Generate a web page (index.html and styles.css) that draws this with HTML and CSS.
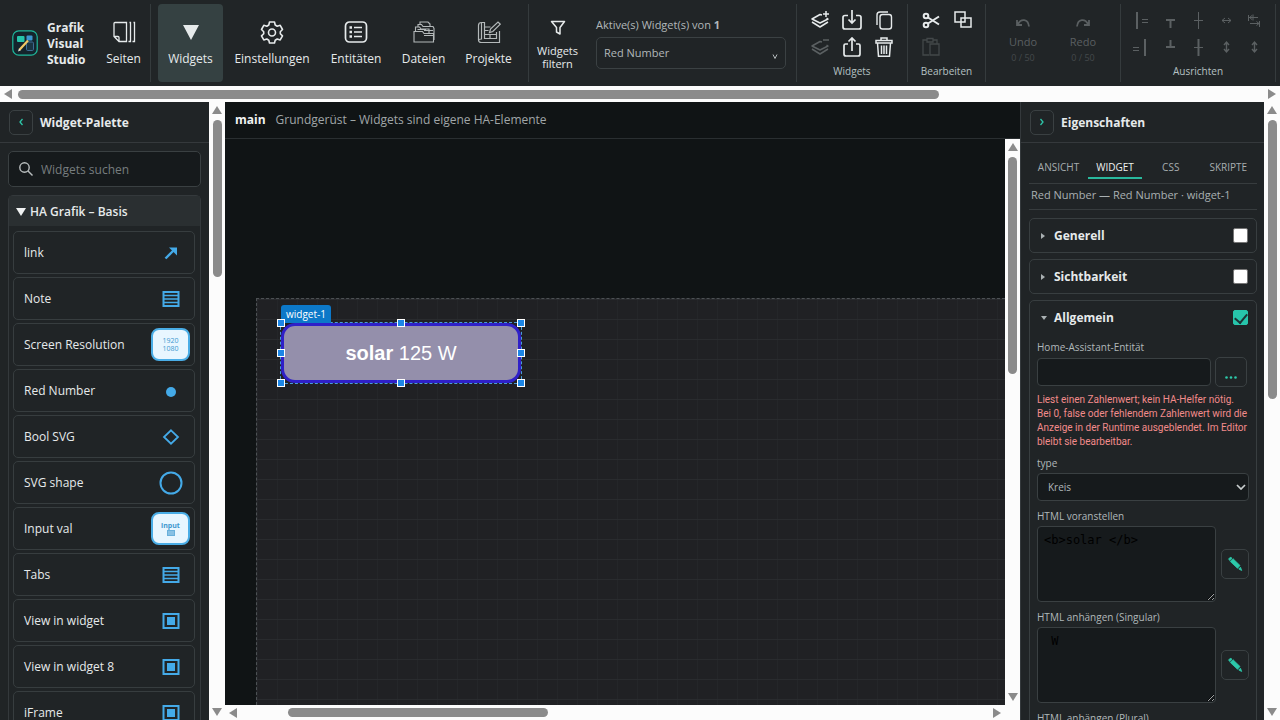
FILE: index.html
```html
<!DOCTYPE html>
<html lang="de">
<head>
<meta charset="utf-8">
<title>Grafik Visual Studio</title>
<link rel="stylesheet" href="styles.css">
</head>
<body>
<svg class="defs" aria-hidden="true">
  <symbol id="i-rows" viewBox="0 0 18 16"><path d="M1.500 1h15v14h-15z" fill="none" stroke="currentColor" stroke-width="2"/><path d="M2 4.500h14M2 8h14M2 11.500h14" fill="none" stroke="currentColor" stroke-width="1.500"/></symbol>
  <symbol id="i-frame" viewBox="0 0 18 16"><path d="M1.500 1h15v14h-15z" fill="none" stroke="currentColor" stroke-width="2"/><path d="M5 4h8v8H5z" fill="currentColor"/></symbol>
  <symbol id="i-pencil" viewBox="0 0 16 16"><path d="M1.500 3.200 3.200 1.300 5 2 3 4.500zM3.300 5.500 6 2.700 13 9.500l-2.500 2.800zM11.700 13l1.800-1.800 1.200 3.300z" fill="currentColor" stroke="currentColor" stroke-width=".8" stroke-linejoin="round"/></symbol>
</svg>

<header class="toolbar">
  <div class="brand">
    <svg class="logo" viewBox="0 0 26 26"><rect x=".8" y=".8" width="24.400" height="24.400" rx="6" fill="#14242c" stroke="#1fb89c" stroke-width="1.200"/><rect x="5" y="6" width="7.500" height="6" rx="1" fill="#25c4aa"/><rect x="14.500" y="5.500" width="6" height="5" rx="1" fill="#3d95cf"/><rect x="14.500" y="12" width="7" height="8.500" rx="1.200" fill="#1b3442" stroke="#3d6d94"/><path d="M7.500 19.800 16 10.500" stroke="#f2c864" stroke-width="2.200"/><path d="m6 21.500 1-3 1.800 1.800z" fill="#f4f0df"/></svg>
    <strong class="brand-name">Grafik Visual Studio</strong>
  </div>
  <button class="tool tool-pages" type="button">
    <svg class="tool-icon" viewBox="0 0 24 24" fill="none" stroke="currentColor" stroke-width="1.300"><path d="M2 3.500Q2 2.500 3 2.500h11.500V21.500H7L2 16.500zM2 16.500h4q1 0 1 1v4M17.500 2.500h1v19h-2M21.500 2.500h1v19h-2"/></svg>
    <span>Seiten</span>
  </button>
  <nav class="group group-views">
    <button class="tool tool-active" type="button"><svg class="tool-icon" viewBox="0 0 24 24"><path d="M4 5h16l-8 15z" fill="currentColor"/></svg><span>Widgets</span></button>
    <button class="tool tool-wide" type="button"><svg class="tool-icon" viewBox="0 0 24 24" fill="none" stroke="currentColor" stroke-width="1.600" stroke-linejoin="round"><path d="M9.500 2h5l.7 3 2 1.200 3-.9 2.300 4.200-2.200 2.200v2l2.200 2.200-2.300 4-3-.9-2 1.200-.7 2.800h-5l-.7-2.800-2-1.200-3 .9-2.300-4 2.200-2.200v-2L1.500 9.500l2.300-4.200 3 .9 2-1.200z"/><circle cx="12" cy="12.500" r="3.500"/></svg><span>Einstellungen</span></button>
    <button class="tool tool-mid" type="button"><svg class="tool-icon" viewBox="0 0 24 24" fill="none" stroke="currentColor" stroke-width="1.700"><rect x="1.500" y="2" width="21" height="20" rx="4"/><path d="M10 7.500h8M10 12h8M10 16.500h8"/><path d="M5.500 7.500h2.500M5.500 12h2.500M5.500 16.500h2.500" stroke-width="2.400"/></svg><span>Entitäten</span></button>
    <button class="tool" type="button"><svg class="tool-icon tool-icon-dim" viewBox="0 0 24 24" fill="none" stroke="currentColor" stroke-width="1.100"><path d="M2 11.500h8.500l1.500 2h9.500V22H2zM3.500 11V7h4l1.500 2h8v4M6 7V4.500h3.500L11 6.500h7.500M8 4V2h8l2 2v2.500h3l1 2V20M5.500 9.500H14M12 10.500h9M12 15.500h9"/></svg><span>Dateien</span></button>
    <button class="tool" type="button"><svg class="tool-icon tool-icon-dim" viewBox="0 0 24 24" fill="none" stroke="currentColor" stroke-width="1.200"><path d="M4.500 2.500q-3 0-3 3V20q0 2.500 3 2.500h18V11M4.500 2.500v16.500q-3 0-3 2M4.500 2.500h3V7h6M7.500 7v11.500h12V12M7.500 14.500h12M13 14.500v4M7.500 10.500h4"/><path d="m12.500 12.500 1-3.500L21 2l2.300 2.200-7.500 7.300z"/></svg><span>Projekte</span></button>
  </nav>
  <div class="group group-active">
    <button class="tool filter" type="button"><svg class="filter-icon" viewBox="0 0 16 16"><path d="M1.500 1.500h13L10 7.500V14L6.500 12V7.500z" fill="none" stroke="currentColor" stroke-width="1.500" stroke-linejoin="round"/></svg><span>Widgets filtern</span></button>
    <div class="picker">
      <label for="active-widget">Aktive(s) Widget(s) von <b>1</b></label>
      <div class="picker-box">
        <select id="active-widget"><option>Red Number</option></select>
        <svg class="picker-arrow" viewBox="0 0 6 6"><path d="m1 .5 2 4 2-4" fill="none" stroke="currentColor"/></svg>
      </div>
    </div>
  </div>
  <section class="group stack group-widgets">
    <div class="icons icons-three">
      <button type="button" aria-label="Ebene hinzufügen"><svg viewBox="0 0 20 20" fill="none" stroke="currentColor" stroke-width="1.500" stroke-linejoin="round"><path d="M12 5 10 4.500 2 9l8 4 8-4-1.500-1M2 12l8 5 8-5M16 1v6M13 4h6"/></svg></button>
      <button type="button" aria-label="Importieren"><svg viewBox="0 0 20 20" fill="none" stroke="currentColor" stroke-width="1.700"><path d="M6 5.500H3q-2 0-2 2V17q0 2 2 2h14q2 0 2-2V7.500q0-2-2-2h-3M10 0v13M6.500 9.500 10 13l3.500-3.500"/></svg></button>
      <button type="button" aria-label="Kopieren"><svg viewBox="0 0 20 20" fill="none" stroke="currentColor" stroke-width="1.400"><rect x="6" y="4.500" width="11.500" height="14.500" rx="2.500"/><path d="M3 15V5q0-3 3-3h8"/></svg></button>
      <button class="off" type="button" aria-label="Ebene entfernen"><svg viewBox="0 0 20 20" fill="none" stroke="currentColor" stroke-width="1.500" stroke-linejoin="round"><path d="M12 5 10 4.500 2 9l8 4 8-4-1.500-1M2 12l8 5 8-5M13 3h6"/></svg></button>
      <button type="button" aria-label="Exportieren"><svg viewBox="0 0 20 20" fill="none" stroke="currentColor" stroke-width="1.700"><path d="M6 7H3.500Q2 7 2 8.500V17q0 2 2 2h12q2 0 2-2V8.500Q18 7 16.500 7H14M10 14V1M6.500 4.500 10 1l3.500 3.500"/></svg></button>
      <button type="button" aria-label="Löschen"><svg viewBox="0 0 20 20" fill="none" stroke="currentColor" stroke-width="1.500"><path d="M2 3.500h16V6H2zM7 3.500V1h6v2.500M3.500 6l1 13.200h11l1-13.200M7.500 8.500V17M10 8.500V17M12.500 8.500V17"/></svg></button>
    </div>
    <h2>Widgets</h2>
  </section>
  <section class="group stack group-edit">
    <div class="icons icons-two">
      <button type="button" aria-label="Ausschneiden"><svg viewBox="0 0 20 20" fill="none" stroke="currentColor" stroke-width="2"><circle cx="5" cy="6" r="2.300"/><circle cx="5" cy="15" r="2.300"/><path d="m7 7.500 11 7M7 13.500l11-7"/></svg></button>
      <button type="button" aria-label="Duplizieren"><svg viewBox="0 0 20 20" fill="none" stroke="currentColor" stroke-width="1.500"><path d="M2 2h10v10H2zM8 8h10v9H8z"/></svg></button>
      <button class="off faint" type="button" aria-label="Einfügen"><svg viewBox="0 0 20 20" fill="none" stroke="currentColor" stroke-width="1.300"><path d="M8 18H2V3h4m6 0h4v4M6 1.500h6v3.500H6zM9 7h9v11H9z"/></svg></button>
    </div>
    <h2>Bearbeiten</h2>
  </section>
  <section class="group group-history">
    <button class="history" type="button" disabled><svg viewBox="0 0 16 10" fill="none" stroke="currentColor" stroke-width="1.800"><path d="M14 8.500C13 .5 6 .5 3 6M2 2v5h5"/></svg><span>Undo</span><small>0 / 50</small></button>
    <button class="history" type="button" disabled><svg viewBox="0 0 16 10" fill="none" stroke="currentColor" stroke-width="1.800"><path d="M2 8.500C3 .5 10 .5 13 6M14 2v5H9"/></svg><span>Redo</span><small>0 / 50</small></button>
  </section>
  <section class="group stack group-align">
    <div class="icons icons-five off">
      <button type="button" aria-label="Links"><svg viewBox="0 0 20 20" stroke="currentColor" fill="none"><path d="M5 2v17" stroke-width="2"/><path d="M10 9.500h6M10 12.500h6"/></svg></button>
      <button type="button" aria-label="Oben"><svg viewBox="0 0 20 20" stroke="currentColor" fill="none"><path d="M6 10h9M10.500 9v9" stroke-width="2"/></svg></button>
      <button type="button" aria-label="Horizontal zentrieren"><svg viewBox="0 0 20 20" stroke="currentColor" fill="none"><path d="M10.500 2v17M6 10.500h9"/></svg></button>
      <button type="button" aria-label="Gleiche Breite"><svg viewBox="0 0 20 20" stroke="currentColor" fill="none"><path d="M6 10.500h9M9 8l-3 2.500L9 13M12 8l3 2.500-3 2.500"/></svg></button>
      <button type="button" aria-label="Abstand"><svg viewBox="0 0 20 20" stroke="currentColor" fill="none"><path d="M4.500 5v6M5 7.500h9M8 5.500 5.500 7.500l2.500 2M15.500 11v6M6 13.500h9M12.500 11.500l2.500 2-2.500 2M9 4.500v6"/></svg></button>
      <button type="button" aria-label="Rechts"><svg viewBox="0 0 20 20" stroke="currentColor" fill="none"><path d="M13 2v17" stroke-width="2"/><path d="M1 10.500h6M1 13.500h6"/></svg></button>
      <button type="button" aria-label="Unten"><svg viewBox="0 0 20 20" stroke="currentColor" fill="none"><path d="M6 10h9M10.500 3v7" stroke-width="2"/></svg></button>
      <button type="button" aria-label="Vertikal zentrieren"><svg viewBox="0 0 20 20" stroke="currentColor" fill="none"><path d="M10.500 2v17" stroke-width="2"/><path d="M6 10.500h9"/></svg></button>
      <button type="button" aria-label="Gleiche Höhe"><svg viewBox="0 0 20 20" stroke="currentColor" fill="none" stroke-width="1.400"><path d="M10.500 5v10M8 8l2.500-3L13 8M8 12l2.500 3 2.500-3"/></svg></button>
      <button type="button" aria-label="Vertikal verteilen"><svg viewBox="0 0 20 20" stroke="currentColor" fill="none" stroke-width="1.400"><path d="M10.500 5v10M8 8l2.500-3L13 8M8 12l2.500 3 2.500-3"/></svg></button>
    </div>
    <h2>Ausrichten</h2>
  </section>
</header>
<div class="bar bar-x"><i class="tip tip-left"></i><div class="track"><i class="thumb thumb-top"></i></div><i class="tip tip-right"></i></div>

<main class="work">
  <aside class="palette">
    <div class="panel-head"><button class="fold" type="button" aria-label="Einklappen"><svg viewBox="0 0 6 8"><path d="M4.500 1 2 4l2.500 3" fill="none" stroke="currentColor" stroke-width="1.300"/></svg></button><h1>Widget-Palette</h1></div>
    <label class="search"><svg viewBox="0 0 14 14" fill="none" stroke="currentColor" stroke-width="1.400"><circle cx="5.500" cy="5.500" r="4.700"/><path d="m9 9 4.500 4.500"/></svg><input type="search" placeholder="Widgets suchen" aria-label="Widgets suchen"></label>
    <section class="category">
      <h2><i class="caret"></i>HA Grafik – Basis</h2>
      <ul>
        <li>link<span class="glyph"><svg viewBox="0 0 18 16"><path d="m3.500 13.500 8-8" stroke="currentColor" stroke-width="2.400"/><path d="M7 2.500h8v8l-2.500-2.500-3-3z" fill="currentColor"/></svg></span></li>
        <li>Note<span class="glyph"><svg><use href="#i-rows"/></svg></span></li>
        <li>Screen Resolution<span class="chip"><span>1920</span><span>1080</span></span></li>
        <li>Red Number<span class="glyph"><svg viewBox="0 0 18 16"><circle cx="9" cy="9" r="5" fill="currentColor"/></svg></span></li>
        <li>Bool SVG<span class="glyph"><svg viewBox="0 0 18 16"><path d="m9 1.300 7 6.700-7 6.700L2 8z" fill="none" stroke="currentColor" stroke-width="1.800"/></svg></span></li>
        <li>SVG shape<span class="glyph"><svg class="big" viewBox="0 0 24 24"><circle cx="12" cy="12" r="10.500" fill="none" stroke="currentColor" stroke-width="2"/></svg></span></li>
        <li>Input val<span class="chip"><b>input</b><svg viewBox="0 0 8 6"><path d="M0 0h8v6H0z" fill="currentColor" opacity=".75"/><path d="M1 2h6M1 4h6" stroke="#e8f6ff" stroke-width=".5"/></svg></span></li>
        <li>Tabs<span class="glyph"><svg><use href="#i-rows"/></svg></span></li>
        <li>View in widget<span class="glyph"><svg><use href="#i-frame"/></svg></span></li>
        <li>View in widget 8<span class="glyph"><svg><use href="#i-frame"/></svg></span></li>
        <li>iFrame<span class="glyph"><svg><use href="#i-frame"/></svg></span></li>
      </ul>
    </section>
  </aside>
  <div class="bar bar-y"><i class="tip tip-up"></i><div class="track"><i class="thumb thumb-palette"></i></div><i class="tip tip-down"></i></div>

  <section class="editor">
    <header class="editor-head"><strong>main</strong><span>Grundgerüst – Widgets sind eigene HA-Elemente</span></header>
    <div class="stage">
      <div class="page">
        <div class="node">
          <span class="node-tag">widget-1</span>
          <div class="node-body"><span><b>solar</b> 125 W</span></div>
          <i class="h nw"></i><i class="h n"></i><i class="h ne"></i><i class="h w"></i><i class="h e"></i><i class="h sw"></i><i class="h s"></i><i class="h se"></i>
        </div>
      </div>
    </div>
    <div class="bar bar-y"><i class="tip tip-up"></i><div class="track"><i class="thumb thumb-stage"></i></div><i class="tip tip-down"></i></div>
    <div class="bar bar-x"><i class="tip tip-left"></i><div class="track"><i class="thumb thumb-bottom"></i></div><i class="tip tip-right"></i></div>
    <div class="corner"></div>
  </section>

  <aside class="props">
    <div class="panel-head"><button class="fold" type="button" aria-label="Ausklappen"><svg viewBox="0 0 6 8"><path d="M1.500 1 4 4 1.500 7" fill="none" stroke="currentColor" stroke-width="1.300"/></svg></button><h1>Eigenschaften</h1></div>
    <div class="props-body">
      <nav class="tabs"><button type="button">ANSICHT</button><button class="on" type="button">WIDGET</button><button type="button">CSS</button><button type="button">SKRIPTE</button></nav>
      <p class="subject">Red Number — Red Number · widget-1</p>
      <section class="card"><h2><i class="mark"></i><label for="c1">Generell</label><input id="c1" type="checkbox"></h2></section>
      <section class="card"><h2><i class="mark"></i><label for="c2">Sichtbarkeit</label><input id="c2" type="checkbox"></h2></section>
      <section class="card card-open">
        <h2><i class="mark mark-open"></i><label for="c3">Allgemein</label><input id="c3" type="checkbox" checked></h2>
        <div class="fields">
          <label for="entity">Home-Assistant-Entität</label>
          <div class="row"><input class="text" id="entity" type="text"><button class="small more" type="button" aria-label="Auswählen"><svg viewBox="0 0 12 3" fill="currentColor"><circle cx="1.500" cy="1.500" r="1.300"/><circle cx="6" cy="1.500" r="1.300"/><circle cx="10.500" cy="1.500" r="1.300"/></svg></button></div>
          <p class="hint">Liest einen Zahlenwert; kein HA-Helfer nötig. Bei 0, false oder fehlendem Zahlenwert wird die Anzeige in der Runtime ausgeblendet. Im Editor bleibt sie bearbeitbar.</p>
          <label for="type">type</label>
          <div class="type-box"><select id="type"><option>Kreis</option></select><svg viewBox="0 0 10 6"><path d="m1 1 4 4 4-4" fill="none" stroke="currentColor" stroke-width="1.700"/></svg></div>
          <label for="pre">HTML voranstellen</label>
          <div class="row row-area"><textarea id="pre">&lt;b&gt;solar &lt;/b&gt;</textarea><button class="small" type="button" aria-label="Bearbeiten"><svg><use href="#i-pencil"/></svg></button></div>
          <label for="post">HTML anhängen (Singular)</label>
          <div class="row row-area"><textarea id="post"> W</textarea><button class="small" type="button" aria-label="Bearbeiten"><svg><use href="#i-pencil"/></svg></button></div>
          <label for="plural">HTML anhängen (Plural)</label>
          <div class="row row-area"><textarea id="plural"></textarea><button class="small" type="button" aria-label="Bearbeiten"><svg><use href="#i-pencil"/></svg></button></div>
        </div>
      </section>
    </div>
  </aside>
  <div class="bar bar-y"><i class="tip tip-up"></i><div class="track"><i class="thumb thumb-props"></i></div><i class="tip tip-down"></i></div>
</main>
</body>
</html>
```
FILE: styles.css
```css
* { box-sizing: border-box; }
body { margin: 0; height: 100vh; display: flex; flex-direction: column; overflow: hidden; background: #101415; color: #e6eaeb; font: 12px/16px "Open Sans", "Noto Sans", sans-serif; }
h1, h2, p, ul { margin: 0; padding: 0; list-style: none; }
h1 { font-size: 12px; font-weight: 700; padding-top: 2px; }
button, input, select, textarea { font: inherit; color: inherit; margin: 0; }
button { background: none; border: 0; padding: 0; }
svg { display: block; flex: none; }
.defs { position: absolute; width: 0; height: 0; }

/* toolbar */
.toolbar { flex: none; height: 86px; display: flex; padding: 4px 4px 4px 12px; background: #212527; overflow: hidden; }
.brand { flex: none; width: 85px; display: flex; align-items: center; gap: 9px; }
.logo { width: 26px; height: 26px; }
.brand-name { width: 50px; font-size: 12px; line-height: 16px; padding-top: 2px; }
.tool { display: flex; flex-direction: column; align-items: center; gap: 5px; padding-top: 16px; width: 65px; height: 78px; border-radius: 4px; font-size: 12px; line-height: 20px; flex: none; }
.tool-pages { width: 53px; }
.tool-icon { width: 24px; height: 24px; }
.tool-icon-dim { color: #b4b9ba; }
.tool-active { background: #354142; }
.tool-wide { width: 98px; }
.tool-mid { width: 70px; }
.group { flex: none; border-left: 1px solid #353b3d; }
.group-views { display: flex; padding-left: 7px; width: 378px; }
.group-active { display: flex; flex: 1; }
.filter { width: 57px; font-size: 11px; line-height: 13px; gap: 8px; }
.filter-icon { width: 16px; height: 16px; }
.picker { flex: 1; padding: 13px 10px 0; color: #b2b8ba; font-size: 11px; }
.picker-box { display: grid; align-items: center; margin-top: 4px; }
.picker-box select { grid-area: 1 / 1; appearance: none; width: 100%; height: 32px; padding: 0 7px; border: 1px solid #3b4143; border-radius: 5px; background: #202426; }
.picker-arrow { grid-area: 1 / 1; justify-self: end; width: 6px; height: 6px; margin: 7px 8px 0 0; }
.stack { display: flex; flex-direction: column; align-items: center; padding-top: 6px; }
.stack h2 { font-size: 10px; font-weight: 400; line-height: 14px; color: #b5c1c3; margin-top: 7px; }
.icons { display: grid; row-gap: 7px; column-gap: 12px; }
.icons svg { width: 20px; height: 20px; }
.icons-three { grid-template-columns: repeat(3, 20px); }
.icons-two { grid-template-columns: repeat(2, 20px); }
.icons-five { grid-template-columns: repeat(5, 20px); column-gap: 8px; }
.off { color: #5b6062; }
.faint { color: #43484a; }
.group-widgets { width: 111px; }
.group-edit { width: 78px; }
.group-history { width: 135px; display: flex; padding-left: 7px; }
.history { display: flex; flex-direction: column; align-items: center; width: 60px; height: 64px; padding-top: 14px; color: #5a5f61; font-size: 11px; }
.history svg { width: 16px; height: 10px; margin-bottom: 6px; }
.history small { font-size: 9px; color: #44494b; }
.group-align { width: 156px; border-right: 1px solid #353b3d; }

/* scroll bars */
.bar { display: flex; align-items: center; background: #fcfcfc; flex: none; }
.bar-x { height: 16px; padding: 0 4px; }
.bar-y { flex-direction: column; width: 16px; padding: 4px 0; }
.track { flex: 1; display: flex; }
.bar-x .track { padding: 0 6px; }
.bar-y .track { padding: 6px 0; }
.thumb { display: block; flex: none; background: #8b8b8b; border-radius: 5px; width: 9px; height: 9px; }
.thumb-top { width: 74%; }
.thumb-bottom { width: 35%; margin-left: 6%; }
.bar-y .thumb-palette { height: 27%; }
.bar-y .thumb-stage { height: 41%; }
.bar-y .thumb-props { height: 48%; }
.bar-y .track { width: 9px; }
.tip { border: 5px solid transparent; width: 0; height: 0; }
.tip-left { border-right: 8px solid #8b8b8b; border-left: 0; }
.tip-right { border-left: 8px solid #8b8b8b; border-right: 0; }
.tip-up { border-bottom: 8px solid #8b8b8b; border-top: 0; }
.tip-down { border-top: 8px solid #8b8b8b; border-bottom: 0; }

.work { flex: 1; min-height: 0; display: flex; }
.panel-head { display: flex; align-items: center; gap: 7px; height: 41px; padding: 0 9px; border-bottom: 1px solid #35393c; flex: none; }
.fold { width: 24px; height: 25px; display: grid; place-items: center; border: 1px solid #3a4042; border-radius: 5px; color: #2dc5a8; }
.fold svg { width: 6px; height: 8px; }

/* palette */
.palette { flex: none; width: 209px; background: #202426; overflow: hidden; }
.search { display: flex; align-items: center; gap: 8px; height: 36px; margin: 8px; padding: 0 10px; border: 1px solid #3a4042; border-radius: 5px; background: #161a1c; }
.search svg { width: 14px; height: 14px; color: #b9bebf; }
.search input { flex: 1; min-width: 0; border: 0; padding: 2px 0 0; background: none; outline: 0; }
.search input::placeholder { color: #777d7f; opacity: 1; }
.category { margin: 0 8px; border: 1px solid #34393c; border-radius: 5px 5px 0 0; }
.category h2 { display: flex; align-items: center; gap: 4px; height: 30px; padding: 2px 7px 0; background: #2a2f31; font-size: 12px; font-weight: 600; }
.caret { border: 5px solid transparent; border-top: 8px solid #f0f2f2; border-bottom: 0; }
.category ul { display: flex; flex-direction: column; gap: 3px; padding: 5px 5px 4px 4px; }
.category li { display: flex; align-items: center; justify-content: space-between; height: 43px; padding: 0 4px 0 10px; border: 1px solid #373d3f; border-radius: 5px; }
.glyph { width: 39px; display: grid; place-items: center; color: #44aae8; }
.glyph svg { width: 18px; height: 16px; }
.glyph .big { width: 24px; height: 24px; }
.chip { display: flex; flex-direction: column; align-items: center; justify-content: center; width: 39px; height: 33px; border: 2px solid #4aade6; border-radius: 8px; background: #e8f6ff; color: #3f98cf; font-size: 7px; line-height: 8px; }
.chip svg { width: 8px; height: 6px; }

/* editor */
.editor { flex: 1; min-width: 0; display: grid; grid-template: 37px minmax(0, 1fr) 15px / minmax(0, 1fr) 15px; }
.editor .bar-y { width: 15px; }
.editor .bar-x { height: 15px; }
.editor-head { grid-column: 1 / -1; display: flex; align-items: center; gap: 10px; padding: 0 10px; border-bottom: 1px solid #2a2f31; color: #a0a6a8; }
.editor-head strong { color: #f0f3f3; }
.stage { overflow: hidden; padding: 159px 0 0 31px; }
.page { position: relative; height: 100%; border: 1px dashed #4c5154; border-width: 1px 0 0 1px; background-color: #202124; background-image: linear-gradient(#292b2e 1px, transparent 1px), linear-gradient(90deg, #242629 1px, transparent 1px); background-size: 20px 20px; }
.node { position: absolute; left: 24px; top: 24px; width: 240px; height: 60px; outline: 1px dashed #4a9cd8; }
.node-body { height: 100%; display: grid; place-items: center; border: 3px solid #2f20c8; border-radius: 14px; background: #948fab; color: #fff; font: 20px/24px "Liberation Sans", Arial, sans-serif; }
.node-tag { position: absolute; left: 0; bottom: 100%; padding: 1px 5px; border-radius: 3px 3px 0 0; background: #0c78c8; color: #fff; font-size: 10px; }
.h { position: absolute; width: 8px; height: 8px; margin: -4px; border: 1px solid #fff; background: #1c86e6; }
.nw, .w, .sw { left: 0; }
.n, .s { left: 50%; }
.ne, .e, .se { left: 100%; }
.nw, .n, .ne { top: 0; }
.w, .e { top: 50%; }
.sw, .s, .se { top: 100%; }
.corner { background: #fcfcfc; }

/* properties */
.props { flex: none; width: 244px; display: flex; flex-direction: column; border-left: 1px solid #34393c; background: #202426; overflow: hidden; }
.props-body { padding: 11px 7px 0 8px; }
.tabs { display: grid; grid-template-columns: 59px 54px 1fr 1fr; height: 30px; border-bottom: 1px solid #373c3e; color: #a7adaf; font-size: 10px; }
.tabs button { height: 25px; padding-top: 2px; border-bottom: 2px solid transparent; }
.tabs .on { color: #eef1f1; border-color: #29b89d; }
.subject { height: 26px; padding: 3px 2px; border-bottom: 1px solid #373c3e; color: #a9b0b2; font-size: 11px; margin-bottom: 8px; white-space: nowrap; }
.card { border: 1px solid #383e40; border-radius: 5px; margin-bottom: 6px; }
.card h2 { display: flex; align-items: center; height: 33px; padding: 0 8px 0 11px; font-size: 12px; font-weight: 700; }
.card h2 label { flex: 1; }
.mark { width: 0; border: 3px solid transparent; border-left: 4px solid #a9b0b2; border-right: 0; margin-right: 9px; }
.mark-open { border: 3px solid transparent; border-top: 4px solid #a9b0b2; border-bottom: 0; margin-right: 7px; }
.card input[type="checkbox"] { appearance: none; width: 15px; height: 15px; border: 1px solid #767676; border-radius: 2px; background: #fff; }
.card input[type="checkbox"]:checked { border-color: #27c5ab; background: #27c5ab; display: grid; place-items: center; }
.card input[type="checkbox"]:checked::after { content: ""; width: 6px; height: 10px; border: solid #1d3335; border-width: 0 2px 2px 0; transform: translateY(-1px) rotate(40deg); }
.fields { display: flex; flex-direction: column; padding: 5px 7px; font-size: 11px; color: #b0b8ba; }
.fields > label { font-size: 10px; line-height: 16px; }
.row { display: flex; align-items: center; gap: 4px; margin: 2px 0 6px; }
.text { flex: 1; min-width: 0; height: 28px; border: 1px solid #3a4042; border-radius: 4px; background: #161a1c; }
.small { flex: none; width: 28px; height: 30px; display: grid; place-items: center; border: 1px solid #3a4042; border-radius: 5px; color: #2cc9aa; }
.small svg { width: 16px; height: 16px; }
.more { width: 32px; margin-right: 2px; }
.more svg { width: 12px; height: 3px; margin-top: 10px; }
.hint { color: #f28b8b; font-family: Roboto, sans-serif; font-size: 10px; line-height: 14px; margin: 0 0 6px; }
.type-box { display: grid; align-items: center; margin: 2px 0 7px; }
.type-box select { grid-area: 1 / 1; appearance: none; width: 100%; height: 28px; padding: 0 10px; border: 1px solid #3a4042; border-radius: 4px; background: #161a1c; font-size: 10px; }
.type-box svg { grid-area: 1 / 1; justify-self: end; width: 10px; height: 6px; margin-right: 3px; color: #c9cecf; }
.row-area { gap: 5px; margin: 2px 0 7px; }
.row-area textarea { flex: 1; min-width: 0; height: 76px; padding: 5px 6px; resize: both; border: 1px solid #3a4042; border-radius: 4px; background: #161a1c; color: #000; font: 12px/16px "DejaVu Sans Mono", monospace; }
```
